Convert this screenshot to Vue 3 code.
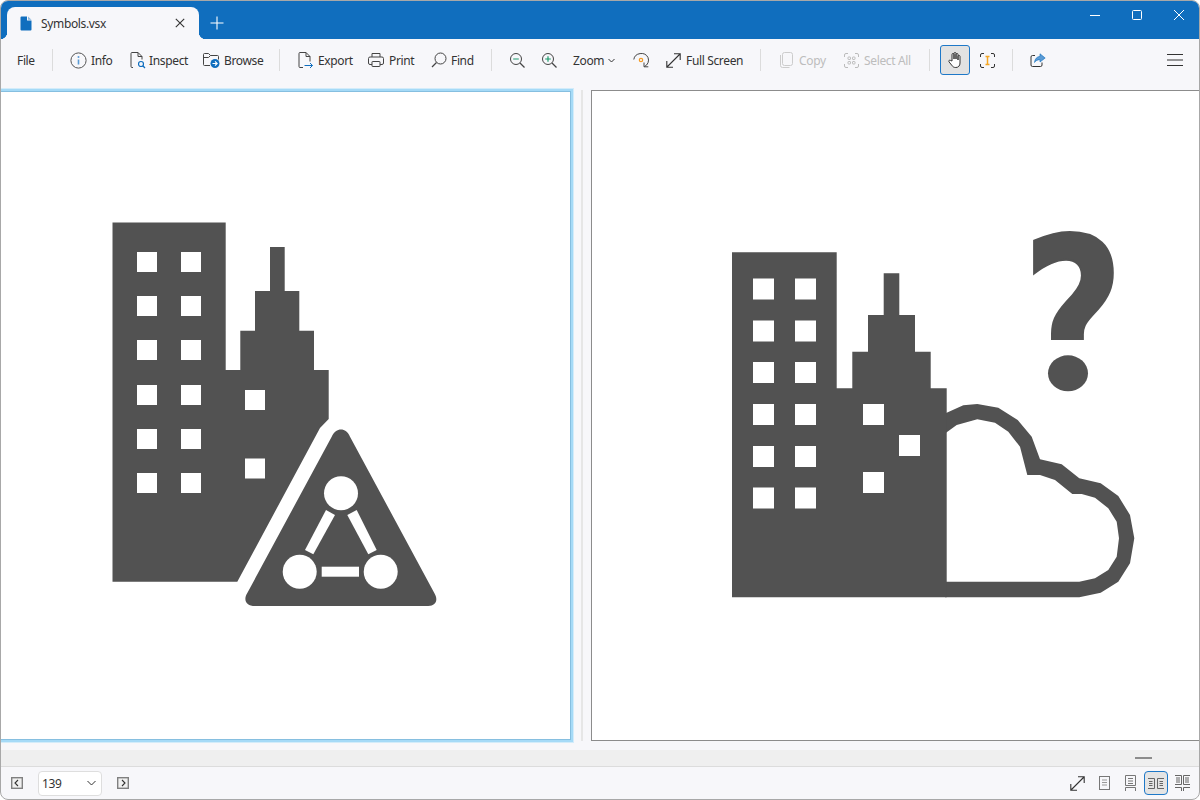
<script setup>
const leftWindows = []
for (const y of [252, 296, 340, 385, 429, 473]) {
  leftWindows.push({ x: 137, y }, { x: 181, y })
}
leftWindows.push({ x: 245, y: 390 }, { x: 245, y: 458.5 })

const rightWindows = []
for (const y of [278.5, 320.5, 362, 404, 446, 487.5]) {
  rightWindows.push({ x: 753, y }, { x: 795, y })
}
rightWindows.push({ x: 863, y: 404 }, { x: 899, y: 435 }, { x: 863, y: 472 })
</script>

<template>
  <div class="window">
    <!-- Title bar -->
    <header class="titlebar">
      <div class="tab">
        <svg class="tab-doc" width="12" height="15" viewBox="0 0 12 15">
          <path d="M0.5 1.5a1 1 0 0 1 1-1H7v4h4.5v9a1 1 0 0 1-1 1h-9a1 1 0 0 1-1-1z" fill="#106ebe" />
          <path d="M8 .5l3.500 3.200H8z" fill="#8db8dd" />
        </svg>
        <span class="tab-title">Symbols.vsx</span>
        <svg class="tab-close" width="10" height="10" viewBox="0 0 10 10">
          <path d="M.8.8l8.400 8.400M9.200.8L.8 9.200" stroke="#333" stroke-width="1.100" fill="none" />
        </svg>
      </div>
      <svg class="tab-new" width="14" height="14" viewBox="0 0 14 14">
        <path d="M7 .5v13M.5 7h13" stroke="#fff" stroke-width="1.100" fill="none" />
      </svg>
      <div class="win-controls">
        <svg width="10" height="10" viewBox="0 0 10 10"><path d="M0 5.500h10" stroke="#fff" stroke-width="1" /></svg>
        <svg width="10" height="10" viewBox="0 0 10 10"><rect x=".5" y=".5" width="9" height="9" rx="1" fill="none" stroke="#fff" /></svg>
        <svg width="10" height="10" viewBox="0 0 10 10"><path d="M0 0l10 10M10 0L0 10" stroke="#fff" stroke-width="1" fill="none" /></svg>
      </div>
    </header>

    <!-- Toolbar -->
    <nav class="toolbar">
      <span class="tool t-file">File</span>
      <i class="sep" />
      <span class="tool t-info">
        <svg width="17" height="17" viewBox="0 0 17 17">
          <circle cx="8.500" cy="8.500" r="7.600" fill="none" stroke="#555" />
          <path d="M8.500 7.500v5" stroke="#5b9bd5" stroke-width="1.600" />
          <circle cx="8.500" cy="5" r="1" fill="#5b9bd5" />
        </svg>
        Info
      </span>
      <span class="tool t-inspect">
        <svg width="16" height="17" viewBox="0 0 16 17">
          <path d="M3 15.500H2a1 1 0 0 1-1-1v-13a1 1 0 0 1 1-1h6l4 4v3M8 .5v4h4" fill="none" stroke="#444" />
          <circle cx="11" cy="12" r="2.500" fill="none" stroke="#106ebe" stroke-width="1.200" />
          <path d="M12.800 13.800l2.200 2.200" stroke="#106ebe" stroke-width="1.300" />
        </svg>
        Inspect
      </span>
      <span class="tool t-browse">
        <svg width="17" height="16" viewBox="0 0 17 16">
          <path d="M7 13.500H1.500a1 1 0 0 1-1-1v-10a1 1 0 0 1 1-1h4l2 2h7a1 1 0 0 1 1 1v3M.5 5.500h5l2-2" fill="none" stroke="#444" />
          <circle cx="12" cy="11.500" r="4.500" fill="#106ebe" />
          <path d="M9.500 11.500h4.500M12 9.300l2.200 2.200-2.200 2.200" fill="none" stroke="#fff" stroke-width="1.100" />
        </svg>
        Browse
      </span>
      <i class="sep" />
      <span class="tool t-export">
        <svg width="15" height="16" viewBox="0 0 15 16">
          <path d="M5 15.500H2a1 1 0 0 1-1-1v-13a1 1 0 0 1 1-1h6l4 4v5M8 .5v4h4" fill="none" stroke="#444" />
          <path d="M6.500 13.500h8M12 11l2.500 2.500L12 16" fill="none" stroke="#106ebe" />
        </svg>
        Export
      </span>
      <span class="tool t-print">
        <svg width="16" height="16" viewBox="0 0 16 16">
          <path d="M4 5V1.500h8V5M4 12.500H2a1.500 1.500 0 0 1-1.500-1.500V6.500A1.500 1.500 0 0 1 2 5h12a1.500 1.500 0 0 1 1.500 1.500V11a1.500 1.500 0 0 1-1.500 1.500h-2" fill="none" stroke="#444" />
          <rect x="4" y="9.500" width="8" height="5" rx=".5" fill="none" stroke="#444" />
        </svg>
        Print
      </span>
      <span class="tool t-find">
        <svg width="16" height="16" viewBox="0 0 16 16">
          <circle cx="9.500" cy="6.500" r="5.500" fill="none" stroke="#444" />
          <path d="M5.500 10.500L1 15" stroke="#444" stroke-width="1.200" />
        </svg>
        Find
      </span>
      <i class="sep" />
      <span class="tool t-zoomout">
        <svg width="15" height="15" viewBox="0 0 15 15">
          <circle cx="6" cy="6" r="5.500" fill="none" stroke="#444" />
          <path d="M10 10l4.500 4.500" stroke="#444" stroke-width="1.200" />
          <path d="M3.200 6h5.600" stroke="#1d9a6c" stroke-width="1.200" />
        </svg>
      </span>
      <span class="tool t-zoomin">
        <svg width="15" height="15" viewBox="0 0 15 15">
          <circle cx="6" cy="6" r="5.500" fill="none" stroke="#444" />
          <path d="M10 10l4.500 4.500" stroke="#444" stroke-width="1.200" />
          <path d="M3.200 6h5.600M6 3.200v5.600" stroke="#1d9a6c" stroke-width="1.200" />
        </svg>
      </span>
      <span class="tool t-zoom">
        Zoom
        <svg width="7" height="5" viewBox="0 0 7 5"><path d="M.5 1l3 3 3-3" fill="none" stroke="#333" /></svg>
      </span>
      <span class="tool t-rotate">
        <svg width="17" height="16" viewBox="0 0 17 16">
          <path d="M.8 7.500A7.500 7 0 0 1 15 5.500a7 7 0 0 1-3.500 9" fill="none" stroke="#444" />
          <path d="M11 10.500v4.300h4.300" fill="none" stroke="#444" />
          <circle cx="8" cy="8" r="1.700" fill="none" stroke="#f59a23" stroke-width="1.200" />
        </svg>
      </span>
      <span class="tool t-full">
        <svg width="15" height="15" viewBox="0 0 15 15">
          <path d="M1 14L14 1M8 .8h6.200V7M.8 8v6.200H7" fill="none" stroke="#333" stroke-width="1.100" />
        </svg>
        Full Screen
      </span>
      <i class="sep" />
      <span class="tool disabled t-copy">
        <svg width="13" height="16" viewBox="0 0 13 16">
          <rect x="2.500" y=".5" width="10" height="13" rx="2" fill="none" stroke="#ccc" />
          <path d="M.5 3v10.500a2 2 0 0 0 2 2h7" fill="none" stroke="#ccc" />
        </svg>
        Copy
      </span>
      <span class="tool disabled t-selectall">
        <svg width="15" height="15" viewBox="0 0 15 15">
          <path d="M.5 4V2a1.500 1.500 0 0 1 1.500-1.500h2M11 .5h2A1.500 1.500 0 0 1 14.500 2v2M14.500 11v2a1.500 1.500 0 0 1-1.500 1.500h-2M4 14.500H2A1.500 1.500 0 0 1 .5 13v-2" fill="none" stroke="#bbb" />
          <rect x="4" y="4" width="2.500" height="2.500" rx=".6" fill="none" stroke="#bbb" />
          <rect x="8.500" y="4" width="2.500" height="2.500" rx=".6" fill="none" stroke="#bbb" />
          <rect x="4" y="8.500" width="2.500" height="2.500" rx=".6" fill="none" stroke="#bbb" />
          <rect x="8.500" y="8.500" width="2.500" height="2.500" rx=".6" fill="none" stroke="#bbb" />
        </svg>
        Select All
      </span>
      <i class="sep" />
      <span class="tool-btn active">
        <svg width="14" height="16" viewBox="0 0 14 16">
          <path d="M4 9V2.500a1 1 0 0 1 2 0V7V1.500a1 1 0 0 1 2 0V7V2.500a1 1 0 0 1 2 0V8V4.500a1 1 0 0 1 2 0V11c0 2.800-1.700 4.500-4.200 4.500-2 0-3-.7-4-2.200L1 9.800c-.8-1.200.8-2.300 1.700-1.300z" fill="#fff" stroke="#333" stroke-linejoin="round" />
        </svg>
      </span>
      <span class="tool t-textsel">
        <svg width="15" height="15" viewBox="0 0 15 15">
          <path d="M.5 4V2a1.500 1.500 0 0 1 1.500-1.500h2M11 .5h2A1.500 1.500 0 0 1 14.500 2v2M14.500 11v2a1.500 1.500 0 0 1-1.500 1.500h-2M4 14.500H2A1.500 1.500 0 0 1 .5 13v-2" fill="none" stroke="#333" />
          <path d="M5.500 3.500h4M5.500 11.500h4M7.500 3.500v8" fill="none" stroke="#f5a623" stroke-width="1.500" />
        </svg>
      </span>
      <i class="sep" />
      <span class="tool t-share">
        <svg width="16" height="15" viewBox="0 0 16 15">
          <path d="M5 2.500H2.500a1.500 1.500 0 0 0-1.500 1.500v8a1.500 1.500 0 0 0 1.500 1.500h8a1.500 1.500 0 0 0 1.500-1.500V9.500" fill="none" stroke="#333" />
          <path d="M10 .8L15.200 5 10 9V6.700c-2.500 0-4.200.8-5.500 2.800C4.800 6 6.800 3.700 10 3.300z" fill="#5b9bd5" stroke="#106ebe" stroke-width=".6" />
        </svg>
      </span>
      <svg class="menu" width="16" height="12" viewBox="0 0 16 12">
        <path d="M0 .5h16M0 6h16M0 11.500h16" stroke="#333" stroke-width="1" />
      </svg>
    </nav>

    <!-- Two page view -->
    <main class="pages">
      <section class="page page-left">
        <svg width="569" height="646" viewBox="1 92 569 646">
          <path class="ink" d="M112.500 222.500H225.700V370H240.300V330.700H255V291H270V247H284.700V291H299.300V330.700H314V370H328.700V419L320 428L237.300 581.700H112.500Z" />
          <rect v-for="w in leftWindows" :key="w.x + '-' + w.y" :x="w.x" :y="w.y" width="20" height="20" fill="#fff" />
          <path class="ink" d="M331.700 436.700C336 427 346 427 350 436.700L434.300 593C438.500 600 436 606 428.300 606H255C246 606 243 600 247.300 593Z" />
          <circle cx="341" cy="493.300" r="17" fill="#fff" />
          <circle cx="299.700" cy="571.700" r="17" fill="#fff" />
          <circle cx="380.700" cy="571.700" r="17" fill="#fff" />
          <rect x="321.700" y="566.700" width="37.300" height="10" fill="#fff" />
          <polygon points="326,510 335,515 313.300,554.300 305,550" fill="#fff" />
          <polygon points="347.300,515 356.700,510 376.700,550 368.300,554.300" fill="#fff" />
        </svg>
      </section>
      <i class="divider" />
      <section class="page page-right">
        <svg width="607" height="648" viewBox="592 91 607 648">
          <defs>
            <clipPath id="q-stem"><rect x="1000" y="200" width="150" height="144" /></clipPath>
          </defs>
          <path class="ink" fill-rule="evenodd" d="M945 413.500L963.300 405.300L977.300 404L998.300 407.700L1017.700 420L1031.700 436.700L1040 459.300L1061.700 464.300L1079.300 478.300L1100.700 483.300L1118.300 496L1130 515L1134.300 538.300L1130 563.300L1118.300 581.700L1100.700 592.700L1079.300 597.300H945ZM945 433.500L956.700 425L977.300 419.300L995 422.700L1008.300 431.700L1020 446.700L1027.300 475H1040L1055 480L1072.300 494H1081.700L1095 497.700L1108.300 508.300L1116.700 521.700L1119 538.300L1116.700 556.700L1108.300 570L1095 578.300L1079.300 581.700H945Z" />
          <path class="ink" d="M732 252.300H836.700V388.300H852.300V351.700H868V315H883.700V273.300H899.300V315H915V351.700H930.700V388.300H946.700V597.300H732Z" />
          <rect v-for="w in rightWindows" :key="w.x + '-' + w.y" :x="w.x" :y="w.y" width="21" height="21" fill="#fff" />
          <g clip-path="url(#q-stem)">
            <text class="qmark" transform="translate(1073 392) scale(.82 1)" text-anchor="middle">?</text>
          </g>
          <ellipse class="ink" cx="1068" cy="373.300" rx="20" ry="18" />
        </svg>
      </section>
    </main>

    <!-- Horizontal scroll track -->
    <div class="track"><i class="thumb" /></div>

    <!-- Status bar -->
    <footer class="statusbar">
      <svg class="pager" width="12" height="12" viewBox="0 0 12 12">
        <rect x=".7" y=".7" width="10.600" height="10.600" fill="#f0f0f0" stroke="#808080" stroke-width="1.400" />
        <path d="M7 3L4 6l3 3" fill="none" stroke="#333" stroke-width="1.100" />
      </svg>
      <div class="page-select">
        <span>139</span>
        <svg width="9" height="6" viewBox="0 0 9 6"><path d="M.5 1l4 4 4-4" fill="none" stroke="#333" /></svg>
      </div>
      <svg class="pager" width="12" height="12" viewBox="0 0 12 12">
        <rect x=".7" y=".7" width="10.600" height="10.600" fill="#f0f0f0" stroke="#808080" stroke-width="1.400" />
        <path d="M5 3l3 3-3 3" fill="none" stroke="#333" stroke-width="1.100" />
      </svg>
      <div class="view-modes">
        <svg width="15" height="15" viewBox="0 0 15 15">
          <path d="M1 14L14 1M8 .8h6.200V7M.8 8v6.200H7" fill="none" stroke="#333" stroke-width="1.100" />
        </svg>
        <svg class="vm-one" width="11" height="14" viewBox="0 0 11 14">
          <rect x=".5" y=".5" width="10" height="13" fill="none" stroke="#777" />
          <path d="M3 4h5M3 6.500h5M3 9h5" stroke="#999" />
        </svg>
        <svg class="vm-cont" width="11" height="16" viewBox="0 0 11 16">
          <path d="M.5 16v-3.500h10V16M.5 10.500V.5h10v10zM3 3.500h5M3 6h5M3 8.500h5" fill="none" stroke="#777" />
        </svg>
        <span class="vm-active">
          <svg width="16" height="11" viewBox="0 0 16 11">
            <path d="M0 .5h6.500v10H0M16 .5H9.500v10H16M1 3.500h3.500M1 5.500h3.500M1 7.500h3.500M11.500 3.500H15M11.500 5.500H15M11.500 7.500H15" fill="none" stroke="#666" />
          </svg>
        </span>
        <svg class="vm-both" width="15" height="16" viewBox="0 0 15 16">
          <path d="M0 .5h6.500v9H0M15 .5H8.500v9H15M0 12.500h6.500V16M15 12.500H8.500V16M1 3h4M1 5h4M1 7h4M10 3h4M10 5h4M10 7h4" fill="none" stroke="#666" />
        </svg>
      </div>
    </footer>
  </div>
</template>

<style scoped>
.window {
  width: 1200px;
  height: 800px;
  box-sizing: border-box;
  border: 1px solid #a8a8a8;
  border-radius: 8px;
  overflow: hidden;
  display: flex;
  flex-direction: column;
  background: #f7f7fa;
  color: #333;
  font-family: "Noto Sans", "Open Sans", Arial, sans-serif;
  font-size: 12px;
  letter-spacing: -0.35px;
}
.titlebar {
  height: 38px;
  flex: none;
  background: #106ebe;
  display: flex;
  align-items: flex-end;
  padding-left: 6px;
}
.tab {
  position: relative;
  width: 192px;
  height: 32px;
  box-sizing: border-box;
  background: #f7f7fa;
  border-radius: 8px 8px 0 0;
  display: flex;
  align-items: center;
  padding: 0 14px 0 13px;
}
.tab::before,
.tab::after {
  content: "";
  position: absolute;
  bottom: 0;
  width: 7px;
  height: 7px;
}
.tab::before {
  left: -7px;
  background: radial-gradient(circle at 0 0, transparent 7px, #f7f7fa 7.5px);
}
.tab::after {
  right: -7px;
  background: radial-gradient(circle at 100% 0, transparent 7px, #f7f7fa 7.5px);
}
.tab-doc { flex: none; }
.tab-title { margin-left: 9px; flex: 1; color: #333; }
.tab-close { flex: none; }
.tab-new { margin: 0 0 9px 11px; }
.win-controls {
  margin-left: auto;
  align-self: flex-start;
  display: flex;
  gap: 32px;
  padding: 9px 15px 0 0;
}
.toolbar {
  height: 50px;
  box-sizing: border-box;
  flex: none;
  display: flex;
  align-items: center;
  gap: 16px;
  padding: 0 16px 8px;
}
.tool {
  display: flex;
  align-items: center;
  gap: 5px;
  white-space: nowrap;
  flex: none;
}
.tool svg { flex: none; }
.t-file { width: 19px; }
.t-info { width: 44px; gap: 4px; margin-left: 1px; }
.t-inspect { width: 57px; gap: 3px; }
.t-browse { width: 60px; gap: 4px; }
.t-export { width: 54px; margin-left: 2px; }
.t-print { width: 47px; }
.t-find { width: 44px; gap: 4px; }
.t-zoomout { width: 16px; margin-left: 2px; }
.t-zoomin { width: 15px; }
.t-zoom { width: 44px; gap: 4px; }
.t-rotate { width: 17px; }
.t-full { width: 78px; }
.t-copy { width: 48px; margin-left: 3px; gap: 6px; }
.t-selectall { width: 69px; }
.t-textsel { width: 16px; }
.t-share { margin-left: 1px; }
.disabled { color: #bdbdbd; }
.sep {
  width: 1px;
  height: 22px;
  background: #dcdcdc;
  flex: none;
}
.tool-btn {
  width: 30px;
  height: 30px;
  box-sizing: border-box;
  display: flex;
  align-items: center;
  justify-content: center;
  border-radius: 3px;
  flex: none;
}
.active {
  background: #e2e2e2;
  border: 1px solid #1e78c8;
  margin: 0 -6px;
}
.menu { margin-left: auto; }
.pages {
  flex: 1;
  min-height: 0;
  display: flex;
  align-items: stretch;
  padding-bottom: 9px;
}
.page {
  box-sizing: border-box;
  background: #fff;
}
.page svg { display: block; }
.page-left {
  width: 570px;
  margin: 2px 0 1px;
  border-right: 1px solid #86bfe0;
  border-bottom: 1px solid #86bfe0;
  border-top: 1px solid #86bfe0;
  box-shadow: 0 0 0 2px #a5daf7, 0 0 0 3px #d3ecfa;
}
.divider {
  width: 2px;
  background: #e6e6e6;
  margin: 1px 8px 0 10px;
  flex: none;
}
.page-right {
  flex: 1;
  margin-top: 1px;
  border: 1px solid #8c8c8c;
  border-right: none;
}
.ink { fill: #525252; }
.qmark {
  font-family: "DejaVu Sans", sans-serif;
  font-weight: 700;
  font-size: 216px;
  letter-spacing: 0;
  fill: #525252;
  stroke: #525252;
  stroke-width: 2px;
}
.track {
  height: 16px;
  flex: none;
  box-sizing: border-box;
  background: #efefef;
  display: flex;
  align-items: center;
  justify-content: flex-end;
  padding-right: 47px;
}
.thumb {
  width: 17px;
  height: 2px;
  background: #8c8c8c;
}
.statusbar {
  height: 33px;
  box-sizing: border-box;
  flex: none;
  border-top: 1px solid #dcdcdc;
  display: flex;
  align-items: center;
  padding: 0 9px 0 10px;
}
.pager { flex: none; }
.page-select {
  width: 64px;
  height: 25px;
  box-sizing: border-box;
  margin: 0 15px;
  padding: 0 5px 0 3px;
  background: #fff;
  border: 1px solid #dedede;
  border-radius: 4px;
  display: flex;
  align-items: center;
  justify-content: space-between;
}
.view-modes {
  margin-left: auto;
  display: flex;
  align-items: center;
}
.vm-one { margin-left: 14px; }
.vm-cont { margin: 0 8px 0 15px; }
.vm-active {
  width: 24px;
  height: 24px;
  box-sizing: border-box;
  display: flex;
  align-items: center;
  justify-content: center;
  background: #e4e4e4;
  border: 1px solid #1e78c8;
  border-radius: 4px;
}
.vm-both { margin-left: 7px; }
</style>

<style>
html, body { background: #fff; }
</style>
